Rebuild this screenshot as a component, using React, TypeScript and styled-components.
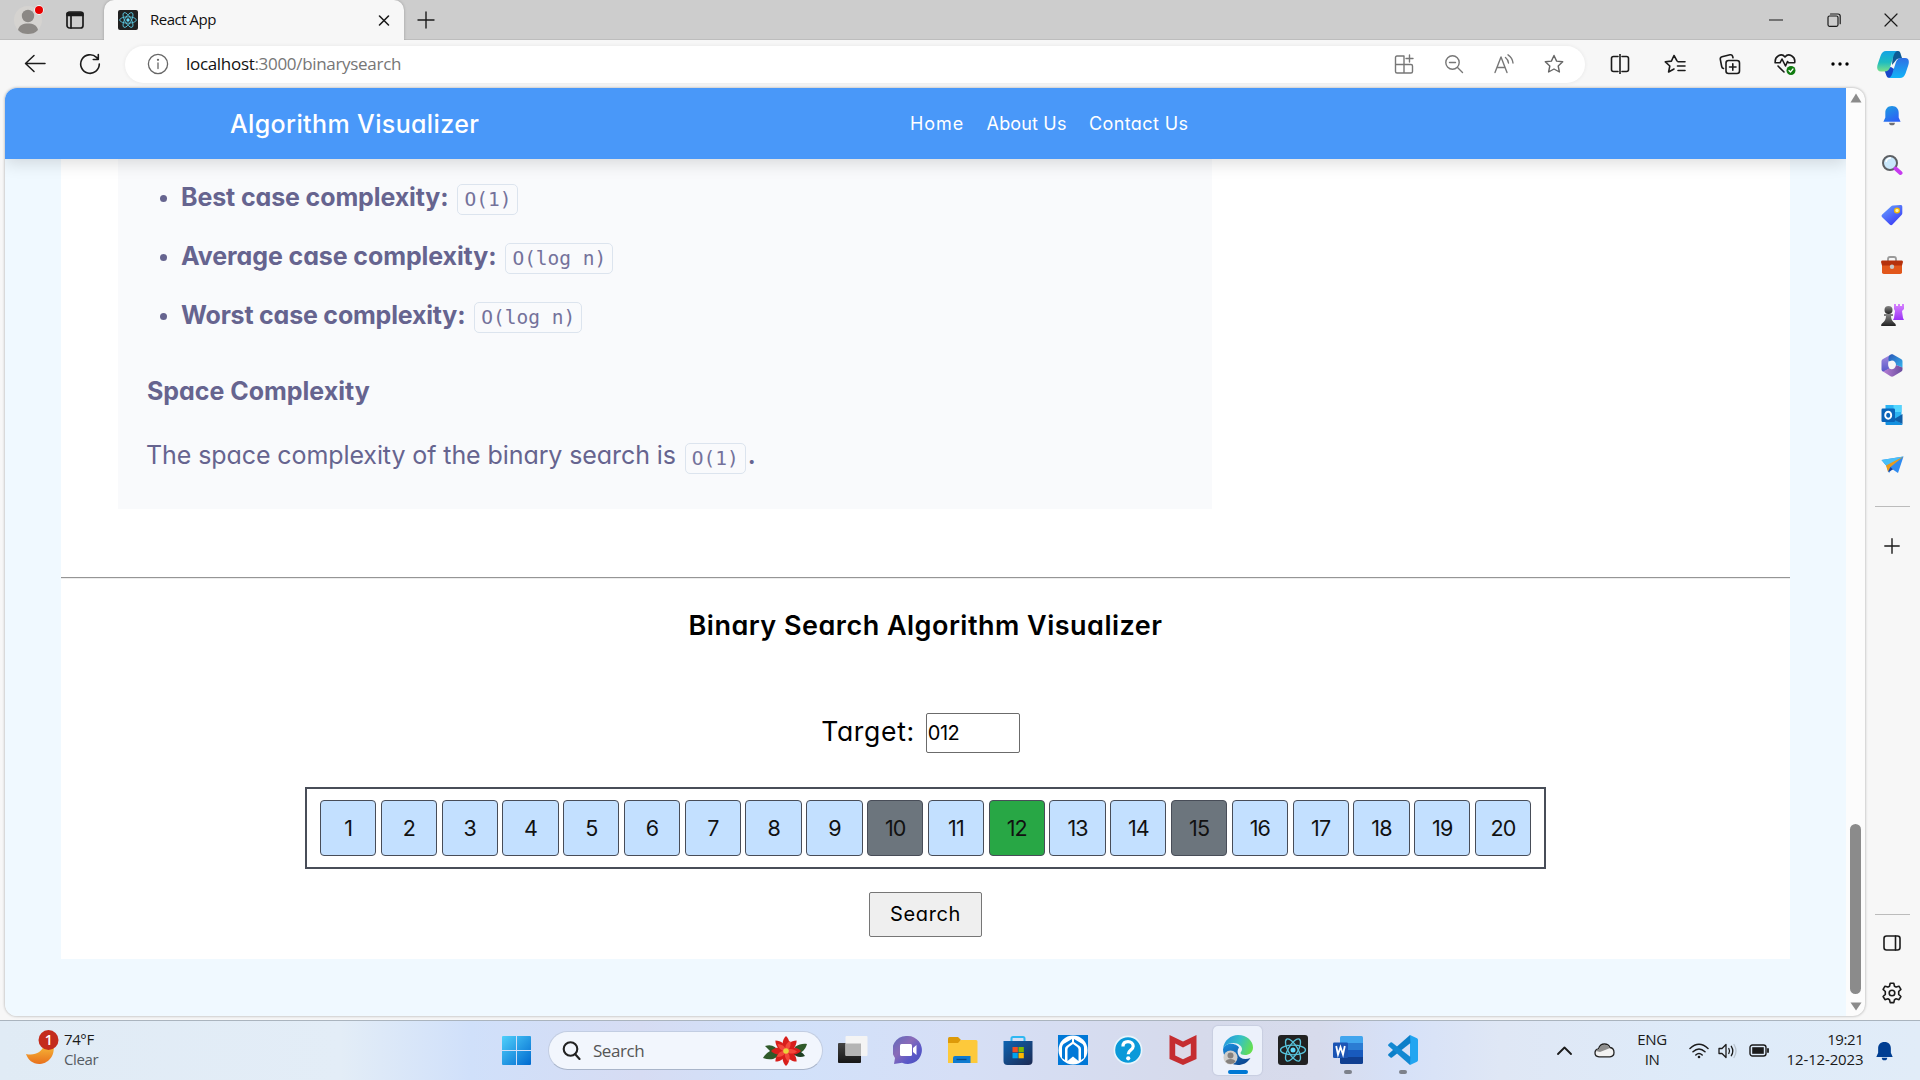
import React from 'react';
import styled, { createGlobalStyle, css } from 'styled-components';

const GlobalStyle = createGlobalStyle`
  * { box-sizing: border-box; }
  body { margin: 0; overflow: hidden; }
`;

const poppins = css`
  font-family: Inter, 'Open Sans', sans-serif;
  font-feature-settings: 'cv11';
`;
const segoe = css`
  font-family: 'Open Sans', 'Noto Sans', sans-serif;
`;

const Screen = styled.div`
  width: 1920px;
  height: 1080px;
  display: flex;
  flex-direction: column;
  overflow: hidden;
  background: #f7f7f7;
  ${segoe}
`;

/* ---------- Browser chrome ---------- */
const TabStrip = styled.div`
  flex: none;
  height: 40px;
  display: flex;
  background: #cdcdcd;
  box-shadow: inset 0 -1px 0 #bdbdbd;
`;
const StripStart = styled.div`
  width: 104px;
  display: flex;
  align-items: center;
  padding-left: 13px;
  gap: 22px;
`;
const Tab = styled.div`
  width: 300px;
  height: 40px;
  padding: 0 12px 0 14px;
  display: flex;
  align-items: center;
  background: #f7f7f7;
  border-radius: 10px 10px 0 0;
  box-shadow: 0 0 3px rgba(0, 0, 0, 0.25);
  clip-path: inset(0 -4px 0 -4px);
`;
const TabTitle = styled.span`
  flex: 1;
  margin-left: 12px;
  padding-bottom: 2px;
  font-size: 15px;
  letter-spacing: -0.48px;
  color: #111;
`;
const NewTab = styled.div`
  width: 43px;
  padding-bottom: 1px;
  display: flex;
  align-items: center;
  justify-content: center;
`;
const WindowButtons = styled.div`
  margin-left: auto;
  display: flex;
`;
const WindowButton = styled.div`
  width: 57.5px;
  height: 39px;
  display: flex;
  align-items: center;
  justify-content: center;
`;
const Toolbar = styled.div`
  flex: none;
  height: 48px;
  display: flex;
  align-items: center;
`;
const NavButtons = styled.div`
  width: 125px;
  display: flex;
  padding-left: 7px;
`;
const Slot = styled.div<{ $w: number }>`
  flex: none;
  width: ${(p) => p.$w}px;
  display: flex;
  align-items: center;
  justify-content: center;
`;
const AddressBar = styled.div`
  width: 1460px;
  height: 37px;
  padding: 0 6px 0 22px;
  display: flex;
  align-items: center;
  background: #fff;
  border-radius: 19px;
  box-shadow: 0 0 4px rgba(0, 0, 0, 0.07);
`;
const Url = styled.span`
  flex: 1;
  margin-left: 17px;
  padding-bottom: 2px;
  font-size: 17px;
  letter-spacing: -0.31px;
  color: #767676;
`;
const Host = styled.span`
  color: #111;
`;
const ToolbarActions = styled.div`
  margin-left: 7px;
  display: flex;
`;

/* ---------- Body ---------- */
const Body = styled.div`
  flex: none;
  height: 932px;
  display: flex;
`;
const Viewport = styled.div`
  margin-left: 5px;
  width: 1860px;
  height: 928px;
  display: flex;
  overflow: hidden;
  background: #fcfcfc;
  border-radius: 12px;
  box-shadow: 0 0 3px rgba(0, 0, 0, 0.35);
`;
const Page = styled.div`
  width: 1841px;
  display: flex;
  flex-direction: column;
  overflow: hidden;
  background: #f0f9ff;
  ${poppins}
`;
const Header = styled.header`
  flex: none;
  z-index: 1;
  height: 71px;
  padding-left: 225px;
  display: flex;
  align-items: center;
  color: #fff;
  background: #4998f9;
  box-shadow: 0 4px 16px rgba(0, 0, 0, 0.14);
`;
const Brand = styled.div`
  width: 680px;
  font-size: 25px;
  font-weight: 500;
  letter-spacing: 0.37px;
`;
const NavLink = styled.a<{ $spacing: number }>`
  margin-right: 22.5px;
  font-size: 18px;
  letter-spacing: ${(p) => p.$spacing}px;
`;
const Content = styled.main`
  width: 1729px;
  height: 800px;
  margin-left: 56px;
  display: flex;
  flex-direction: column;
  align-items: center;
  background: #fff;
`;
const Notes = styled.section`
  align-self: flex-start;
  width: 1094px;
  height: 350px;
  margin-left: 57px;
  padding: 8px 0 0 29px;
  background: #f9fafc;
  color: #66648f;
  font-size: 25px;
`;
const List = styled.ul`
  margin: 0;
  padding: 0 0 0 13px;
  list-style: none;
`;
const Item = styled.li<{ $spacing: number }>`
  height: 59px;
  display: flex;
  align-items: center;
  font-weight: 700;
  letter-spacing: ${(p) => p.$spacing}px;
  &::before {
    content: '';
    width: 7px;
    height: 7px;
    margin: 4px 14px 0 0;
    border-radius: 50%;
    background: #66648f;
  }
`;
const Code = styled.code`
  height: 31px;
  margin: 6px 0 0 9px;
  padding: 0 6px;
  display: inline-flex;
  align-items: center;
  border: 1.5px solid #dce4ee;
  border-radius: 5px;
  font: 400 19.5px 'DejaVu Sans Mono', monospace;
  letter-spacing: 0;
  color: #74729b;
  white-space: pre;
`;
const SpaceTitle = styled.h4`
  height: 48px;
  margin: 23px 0 0;
  line-height: 48px;
  font-size: 25px;
  font-weight: 700;
  letter-spacing: -0.02px;
`;
const SpaceText = styled.p`
  height: 50px;
  margin: 15px 0 0 -1px;
  display: flex;
  align-items: center;
  letter-spacing: -0.09px;
`;
const Period = styled.span`
  margin-left: 2px;
  font-weight: 600;
`;
const Divider = styled.hr`
  width: 100%;
  height: 2px;
  margin: 68px 0 0;
  border: 0;
  border-top: 1px solid #959595;
  border-bottom: 1px solid #ededed;
`;
const Title = styled.h2`
  height: 40px;
  margin: 27px 0 0;
  line-height: 40px;
  font-size: 27px;
  font-weight: 600;
  letter-spacing: 0.48px;
  color: #000;
`;
const TargetRow = styled.label`
  height: 40px;
  margin: 67px 10px 0 0;
  display: flex;
  align-items: center;
  font-size: 26.5px;
  letter-spacing: 0.7px;
  color: #000;
`;
const TargetLabel = styled.span`
  padding-bottom: 5px;
  margin-right: 11px;
`;
const TargetInput = styled.input`
  width: 94px;
  height: 40px;
  padding: 0 1px;
  border: 1px solid #6b6b6b;
  border-radius: 2px;
  font-size: 20px;
  letter-spacing: -0.6px;
  color: #000;
  ${poppins}
`;
const ArrayBox = styled.div`
  width: 1241px;
  height: 82px;
  margin-top: 34px;
  padding: 0 13px;
  display: flex;
  align-items: center;
  gap: 4.5px;
  border: 2px solid #484d58;
`;
type CellState = 'idle' | 'visited' | 'found';
const cellColors: Record<CellState, string> = { idle: '#c3e0ff', visited: '#6c757d', found: '#28a745' };
const Cell = styled.div<{ $state: CellState }>`
  flex: 1 1 0;
  height: 56px;
  padding-bottom: 1px;
  display: flex;
  align-items: center;
  justify-content: center;
  background: ${(p) => cellColors[p.$state]};
  border: 1px solid #484d58;
  border-radius: 4px;
  font-size: 21.5px;
  letter-spacing: -0.9px;
  color: #111;
`;
const SearchButton = styled.button`
  width: 113px;
  height: 45px;
  margin-top: 23px;
  padding: 0 0 2px;
  border: 1px solid #767676;
  border-radius: 2px;
  background: #efefef;
  font-size: 20px;
  letter-spacing: 0.65px;
  color: #000;
  ${poppins}
`;

const ScrollTrack = styled.div`
  width: 19px;
  display: flex;
  flex-direction: column;
  align-items: center;
  padding: 5px 0 5px;
`;
const ScrollThumb = styled.div`
  width: 11px;
  height: 170px;
  margin: auto 0 8px;
  border-radius: 6px;
  background: #8b8b8b;
`;

const SideBar = styled.aside`
  width: 55px;
  padding-right: 1px;
  height: 932px;
  display: flex;
  flex-direction: column;
  align-items: center;
`;
const SideSlot = styled.div<{ $h: number }>`
  flex: none;
  height: ${(p) => p.$h}px;
  display: flex;
  align-items: center;
`;
const SideLine = styled.div`
  width: 35px;
  height: 1px;
  background: #bcbcbc;
`;
const Spacer = styled.div`
  flex: 1;
`;

/* ---------- Taskbar ---------- */
const Taskbar = styled.footer`
  flex: none;
  height: 60px;
  display: flex;
  align-items: center;
  border-top: 1px solid #aab4be;
  background: linear-gradient(90deg, #e0ebf5 0, #e3edf7 340px, #d0e0fa 470px, #d6dcf3 640px, #d1e1fa 780px, #d6dff6 960px, #d6daeb 1200px, #d7dbec 1320px, #d6e1f8 1400px, #dfe7f5 1500px, #deebf9 1700px, #e1ecf8 1920px);
`;
const Weather = styled.div`
  width: 489px;
  padding-left: 26px;
  display: flex;
  align-items: center;
  gap: 4px;
`;
const Lines = styled.div<{ $align: string }>`
  display: flex;
  flex-direction: column;
  padding-bottom: 4px;
  text-align: ${(p) => p.$align};
  font-size: 15px;
  line-height: 20px;
  letter-spacing: -0.4px;
  color: #1a1a1a;
`;
const Stamp = styled.span`
  letter-spacing: -0.15px;
`;
const Muted = styled.span`
  color: #555c63;
`;
const SearchBox = styled.div`
  width: 275px;
  height: 39px;
  margin: 0 2px 0 5px;
  padding: 0 14px 0 13px;
  display: flex;
  align-items: center;
  gap: 12px;
  border: 1px solid #c2cde2;
  border-bottom-color: #a9b5ca;
  border-radius: 20px;
  background: #f2f6fd;
  font-size: 17px;
  letter-spacing: -0.45px;
  color: #555;
`;
const SearchLabel = styled.span`
  flex: 1;
`;
const AppSlot = styled.div<{ $active?: boolean; $running?: boolean }>`
  width: ${(p) => (p.$active ? 49 : 55)}px;
  height: 49px;
  margin: ${(p) => (p.$active ? '0 3px' : '0')};
  padding-top: 9px;
  display: flex;
  flex-direction: column;
  align-items: center;
  border-radius: 5px;
  background: ${(p) => (p.$active ? '#ecf1fb' : 'transparent')};
  box-shadow: ${(p) => (p.$active ? '0 0 1px 1px rgba(120,135,170,.15)' : 'none')};
  &::after {
    content: '';
    width: ${(p) => (p.$active ? 20 : 8)}px;
    height: 4px;
    margin-top: 5px;
    border-radius: 2px;
    background: ${(p) => (p.$active ? '#0078d4' : p.$running ? '#7d818b' : 'transparent')};
  }
`;
const Tray = styled.div`
  margin-left: auto;
  padding-right: 21px;
  display: flex;
  align-items: center;
`;

/* ---------- Icons ---------- */
type LineProps = { w: number; h?: number; c?: string; sw?: number; vb?: string; children: React.ReactNode };
const Line = ({ w, h = w, c = '#1b1b1b', sw = 1.4, vb, children }: LineProps) => (
  <svg width={w} height={h} viewBox={vb ?? `0 0 ${w} ${h}`} fill="none" stroke={c} strokeWidth={sw} strokeLinecap="round" strokeLinejoin="round">
    {children}
  </svg>
);
const Art = ({ w, h = w, vb, children }: { w: number; h?: number; vb?: string; children: React.ReactNode }) => (
  <svg width={w} height={h} viewBox={vb ?? `0 0 ${w} ${h}`}>{children}</svg>
);

const ReactLogo = ({ size }: { size: number }) => (
  <Art w={size} vb="0 0 30 30">
    <rect width="30" height="30" rx="3" fill="#212121" />
    <g fill="none" stroke="#58c4dc" strokeWidth="1.3">
      <ellipse cx="15" cy="15" rx="12.5" ry="4.8" />
      <ellipse cx="15" cy="15" rx="12.5" ry="4.8" transform="rotate(60 15 15)" />
      <ellipse cx="15" cy="15" rx="12.5" ry="4.8" transform="rotate(120 15 15)" />
    </g>
    <circle cx="15" cy="15" r="2.5" fill="#61dafb" />
  </Art>
);

const Avatar = () => (
  <Art w={31} h={34}>
    <circle cx="15" cy="17" r="14" fill="#d5d3d0" />
    <circle cx="15" cy="13" r="6.2" fill="#8b8885" />
    <path d="M5 27c1-5 5-6.500 10-6.500s9 1.500 10 6.500c-3 3-6 4-10 4s-7-1-10-4z" fill="#8b8885" />
    <circle cx="26" cy="7" r="4.700" fill="#fff" />
    <circle cx="26" cy="7" r="4" fill="#e80000" />
  </Art>
);

const starPath = 'M10 1.500l2.600 5.600 6.100.700-4.500 4.200 1.200 6-5.400-3-5.400 3 1.200-6L1.300 7.800l6.100-.700z';

const Copilot = () => (
  <Art w={32} h={28}>
    <defs>
      <linearGradient id="cpA" x1="0" y1="0" x2="0" y2="1"><stop offset="0" stopColor="#14a3e4" /><stop offset=".55" stopColor="#1fbcc0" /><stop offset="1" stopColor="#7be08a" /></linearGradient>
      <linearGradient id="cpB" x1="0" y1="0" x2="0" y2="1"><stop offset="0" stopColor="#2f6fe4" /><stop offset="1" stopColor="#12b4f7" /></linearGradient>
    </defs>
    <path d="M16 1h5c2 0 2.500 2 3 4l1 3-5 1-5 6z" fill="#0d5a94" />
    <path d="M7 19l7-2 3 2-1 9h-3c-2.500 0-3.300-1-4-3.500z" fill="#1747c9" />
    <path d="M9 1h11c-2 1-3 3-3.800 6l-3 10c-1 3-3 4.500-5.500 4.500H4C0 21.500-.5 18 .800 14l2.700-8C4.700 2.500 6.500 1 9 1z" fill="url(#cpA)" />
    <path d="M24 8h4c4 0 4.500 3.500 3.200 7.500l-2.700 8c-1.200 3-3 4.500-5.500 4.500H12c2-1 3-3 3.800-6l3-9.500C19.800 9.500 21.500 8 24 8z" fill="url(#cpB)" />
  </Art>
);

const BellIcon = ({ fill, w, h }: { fill: string; w: number; h: number }) => (
  <Art w={w} h={h} vb="0 0 18 22">
    <defs><linearGradient id="bellG" x1="0" y1="0" x2="0.600" y2="1"><stop offset="0" stopColor="#1da0e0" /><stop offset="1" stopColor="#2c62f5" /></linearGradient></defs>
    <path d="M6 18.500h6a3 2.800 0 0 1-6 0z" fill={fill === 'url(#bellG)' ? '#6f6f74' : fill} />
    <path d="M9 1c4.500 0 7 3 7 7v5l2 4.500H0L2 13V8c0-4 2.500-7 7-7z" fill={fill} />
  </Art>
);

const sideIcons: React.ReactNode[] = [
  <BellIcon key="bell" fill="url(#bellG)" w={18} h={21} />,
  <Art key="search" w={22}>
    <circle cx="9" cy="9" r="7" fill="#c9e7fb" stroke="#5d6064" strokeWidth="2" />
    <path d="M5 8a5 5 0 0 1 5-4" stroke="#fff" strokeWidth="1.500" fill="none" />
    <path d="M14.500 14.500l5 4.500" stroke="#c63bef" strokeWidth="4" strokeLinecap="round" />
  </Art>,
  <Art key="tag" w={22}>
    <defs><linearGradient id="tagG" x1="0" y1="0" x2=".7" y2="1"><stop offset="0" stopColor="#6aa8ff" /><stop offset="1" stopColor="#3a3af5" /></linearGradient></defs>
    <path d="M12 1.500l7.500-.5c1.200 0 1.800.6 1.800 1.800V9c0 1-.3 1.500-1 2.200L11.500 20.500c-1 1-1.800 1-2.800 0L1.200 13.300c-.9-.9-.9-1.900 0-2.800l9-8.300c.5-.5 1-.7 1.800-.7z" fill="url(#tagG)" />
    <circle cx="16" cy="6.500" r="2.400" fill="#fff3a0" stroke="#f5b700" strokeWidth="1.300" />
  </Art>,
  <Art key="toolbox" w={24} h={20}>
    <path d="M8 6V4c0-1.500.6-2 2-2h4c1.500 0 2 .5 2 2v2" fill="none" stroke="#9a9a9a" strokeWidth="1.800" />
    <rect x="2" y="6" width="20" height="13" rx="1.800" fill="#e2571b" />
    <path d="M2.500 5.500h19c.9 0 1.500.6 1.500 1.500l-1 3.500H2L1 7c0-.9.6-1.500 1.500-1.500z" fill="#b5310c" />
    <circle cx="12" cy="11.800" r="2.200" fill="#c8c8c8" />
  </Art>,
  <Art key="chess" w={23} h={24}>
    <defs>
      <linearGradient id="rookG" x1="0" y1="0" x2="0" y2="1"><stop offset="0" stopColor="#d884ff" /><stop offset="1" stopColor="#9a32f5" /></linearGradient>
      <linearGradient id="pawnG" x1="0" y1="0" x2="0" y2="1"><stop offset="0" stopColor="#888" /><stop offset="1" stopColor="#222" /></linearGradient>
    </defs>
    <path d="M13 1h2v2h2V1h2v2h2V1h2v5l-2 2 1 7 1 2H12l1-2 1-7-1-2z" fill="url(#rookG)" />
    <circle cx="7.500" cy="7" r="4" fill="url(#pawnG)" />
    <path d="M3 11h9v2h-2c0 3 1 5 4 7.500.7.500.800 1 .800 2.500H.200c0-1.500.1-2 .8-2.500C4 18 5 16 5 13H3z" fill="url(#pawnG)" />
  </Art>,
  <Art key="m365" w={22} h={23}>
    <defs>
      <linearGradient id="mA" x1="0" y1="0" x2="0" y2="1"><stop offset="0" stopColor="#a78be0" /><stop offset="1" stopColor="#5558c8" /></linearGradient>
      <linearGradient id="mB" x1="0" y1="0" x2="1" y2="1"><stop offset="0" stopColor="#2b57b8" /><stop offset="1" stopColor="#35b4ee" /></linearGradient>
      <linearGradient id="mC" x1="0" y1="0" x2="1" y2="0"><stop offset="0" stopColor="#b77fd6" /><stop offset="1" stopColor="#6a4c9e" /></linearGradient>
    </defs>
    <path d="M10 .5L2 5C1 5.600.500 6.500.500 7.500v8c0 1.500 1.500 2.500 3 2l5-3C7 13 6.800 10 7.500 7z" fill="url(#mA)" />
    <path d="M9.500.800c1-.6 2-.6 3 0L20 5c1 .6 1.500 1.500 1.500 2.500v6l-6.500-2.500c0-3-2-4.500-4-4.500L7.500 7.500V4c0-1.500.8-2.500 2-3.200z" fill="url(#mB)" />
    <path d="M2 17.500l6-3c3 1.500 6 1 7-3.500l6.500 2.500V15c0 1.300-.5 2.200-1.500 2.800l-7.500 4.400c-1 .6-2 .6-3 0z" fill="url(#mC)" />
  </Art>,
  <Art key="outlook" w={22}>
    <rect x="4.500" y="1" width="16" height="14" fill="#2bb3f3" />
    <rect x="12.500" y="1" width="8" height="7" fill="#53d6ff" />
    <path d="M4.500 10L21.500 20c0 .6-.5 1-1 1h-15c-.6 0-1-.4-1-1z" fill="#1490df" />
    <path d="M21.500 10v10l-9-4.500z" fill="#0f5ea8" />
    <rect x=".5" y="4.500" width="13.500" height="13.500" rx="1.200" fill="#0a64b8" />
    <ellipse cx="7.200" cy="11.200" rx="3" ry="3.500" fill="none" stroke="#fff" strokeWidth="1.900" />
  </Art>,
  <Art key="plane" w={23} h={18}>
    <path d="M.5 4L22.500.500 17 17l-6-4-3 4-2.500-7z" fill="#2f8bf0" />
    <path d="M.5 4L22.500.500 5.500 10z" fill="#49c0f8" />
    <path d="M22.500.500L5 9.500 7 16l2.500-5z" fill="#e89b1c" />
    <path d="M7 16l2.500-5 2.500 2.500z" fill="#173f9e" />
  </Art>,
];

const Poinsettia = () => (
  <Art w={45} h={30}>
    <g fill="#2f5a2a">
      <path d="M0 22c5-8 12-10 18-6-4 7-10 9-18 6z" />
      <path d="M2 10c6-2 11 0 14 6H8z" />
      <path d="M44 8c-8-1-14 3-15 9 8 2 13-2 15-9z" />
      <path d="M42 20c-4-6-9-6-13-4 3 5 8 6 13 4z" fill="#1f3f22" />
    </g>
    <g fill="#d81f1c">
      {[0, 45, 90, 135, 180, 225, 270, 315].map((a) => (
        <path key={a} d="M23 15C18 10 19 4 23 0c4 4 5 10 0 15z" transform={`rotate(${a} 23 15)`} />
      ))}
    </g>
    <g fill="#f4483c">
      {[22, 94, 166, 238, 310].map((a) => (
        <path key={a} d="M23 15c-3-3-3-7 0-11 3 4 3 8 0 11z" transform={`rotate(${a} 23 15)`} />
      ))}
    </g>
    <circle cx="23" cy="15" r="2.800" fill="#e9d23a" />
  </Art>
);

const WindowsLogo = () => (
  <Art w={29}>
    <defs><linearGradient id="winG" x1="0" y1="0" x2="29" y2="29" gradientUnits="userSpaceOnUse"><stop offset="0" stopColor="#4fd0fb" /><stop offset="1" stopColor="#0069cf" /></linearGradient></defs>
    <path d="M1 0h13v14H0V1q0-1 1-1zM15 0h13q1 0 1 1v13H15zM0 15h14v14H1q-1 0-1-1zM15 15h14v13q0 1-1 1H15z" fill="url(#winG)" />
  </Art>
);

const appIcons: { id: string; active?: boolean; running?: boolean; icon: React.ReactNode }[] = [
  { id: 'taskview', icon: (
    <Art w={30}>
      <defs><linearGradient id="tvG" x1="0" y1="0" x2="0" y2="1"><stop offset="0" stopColor="#444" /><stop offset="1" stopColor="#161616" /></linearGradient></defs>
      <rect x="0" y="8" width="23" height="20" rx="1" fill="url(#tvG)" />
      <rect x="7.500" y="1" width="22" height="20" rx="1" fill="#f4f4f4" />
      <path d="M7.500 8.500H23V21H8.500q-1 0-1-1z" fill="#b4b4b4" />
    </Art>) },
  { id: 'chat', icon: (
    <Art w={30}>
      <defs><linearGradient id="chG" x1="0" y1="0" x2="1" y2="1"><stop offset="0" stopColor="#5d6bbd" /><stop offset=".4" stopColor="#8a6bb8" /><stop offset=".7" stopColor="#5a58c8" /><stop offset="1" stopColor="#4b4fb8" /></linearGradient></defs>
      <path d="M15 1a14 14 0 1 1-6 26.700L1 29l1-6A14 14 0 0 1 15 1z" fill="url(#chG)" />
      <rect x="7" y="9" width="12" height="12" rx="1.500" fill="#fff" />
      <path d="M20 13l3.500-3v10L20 17z" fill="#fff" />
    </Art>) },
  { id: 'files', icon: (
    <Art w={30}>
      <path d="M0 3.500Q0 2 1.500 2H10l3 3-3 4H0z" fill="#dd9a09" />
      <path d="M0 8h10l3-3h15q1.500 0 1.500 1.500V28H0z" fill="#fdc93b" />
      <path d="M5 28v-5q0-2 2-2h15.500v7z" fill="#0f7bd0" />
      <path d="M8.500 24.500h10" stroke="#0a4a86" strokeWidth="1.300" />
    </Art>) },
  { id: 'store', icon: (
    <Art w={30}>
      <defs><linearGradient id="stG" x1="0" y1="0" x2="1" y2="1"><stop offset="0" stopColor="#0d64b3" /><stop offset="1" stopColor="#1d2a52" /></linearGradient></defs>
      <path d="M8.500 8V3.500q0-1.500 1.500-1.500h10q1.500 0 1.500 1.500V8" fill="none" stroke="#2fb8f2" strokeWidth="2" />
      <path d="M.5 6h29v20q0 4-4 4h-21q-4 0-4-4z" fill="url(#stG)" />
      <rect x="9.500" y="12" width="5.300" height="5.300" fill="#f25022" /><rect x="15.500" y="12" width="5.300" height="5.300" fill="#7fba00" />
      <rect x="9.500" y="18" width="5.300" height="5.300" fill="#00a4ef" /><rect x="15.500" y="18" width="5.300" height="5.300" fill="#ffb900" />
    </Art>) },
  { id: 'assistant', icon: (
    <Art w={30}>
      <rect width="30" height="30" fill="#0078d7" />
      <circle cx="15" cy="15" r="14.500" fill="#fff" />
      <path d="M4 23V12.500Q4 10.500 5.500 9L14 4v3L8.500 11Q7 12 7 14v11zM26 23V12.500Q26 10.500 24.500 9L16 4v3l5.500 4Q23 12 23 14v11z" fill="#0078d7" />
      <path d="M9.500 26V14.500Q9.500 13 10.800 12L15 9l4.200 3q1.300 1 1.300 2.500V26L15 21.500z" fill="#0078d7" />
    </Art>) },
  { id: 'help', icon: (
    <Art w={30}>
      <circle cx="15" cy="15" r="13.600" fill="#0a99d9" stroke="#e8f5fc" strokeWidth="1.600" />
      <path d="M10 11.500c0-3 2-4.800 5-4.800s5.200 1.800 5.200 4.500c0 3.800-5 3.800-5 8" fill="none" stroke="#fff" strokeWidth="3.200" />
      <circle cx="15.200" cy="23.300" r="2.100" fill="#fff" />
    </Art>) },
  { id: 'mcafee', icon: (
    <Art w={30}>
      <path d="M1.500 0L15 6.500 28.500 0v24L15 30 1.500 24z" fill="#c52d30" />
      <path d="M7.200 8.500L15 12.500l7.800-4v12L15 24.300 7.200 20.500z" fill="#dcd9e8" />
    </Art>) },
  { id: 'edge', active: true, icon: (
    <Art w={30}>
      <defs>
        <linearGradient id="edA" x1="0" y1=".3" x2="1" y2=".6"><stop offset="0" stopColor="#2596dd" /><stop offset=".5" stopColor="#35c1c6" /><stop offset="1" stopColor="#66e04d" /></linearGradient>
        <linearGradient id="edB" x1="0" y1="0" x2=".6" y2="1"><stop offset="0" stopColor="#1a8fe0" /><stop offset="1" stopColor="#0c4a94" /></linearGradient>
      </defs>
      <path d="M0 14C0 20 4 30 15 30c5 0 9-2 12.500-7-6 2.500-11 .5-12.500-4-1-3 0-5 1-6.500C14 8.500 3 6 0 14z" fill="url(#edB)" />
      <path d="M0 14C1 5 8 0 15 0c9 0 15 6 15 12.500 0 5-4 7.500-8 7.500-3 0-4.500-1-4.500-2s1.500-1.800 1.500-4c0-3-4-6-8.500-6C6 8 2 10 0 14z" fill="url(#edA)" />
      <circle cx="7.500" cy="22.500" r="7" fill="#cfcdca" /><circle cx="7.500" cy="20.500" r="3" fill="#85817e" />
      <path d="M2.500 26.500q1-2.500 5-2.500t5 2.500q-2 2.500-5 2.500t-5-2.500z" fill="#85817e" />
    </Art>) },
  { id: 'react', icon: <ReactLogo size={30} /> },
  { id: 'word', running: true, icon: (
    <Art w={30}>
      <path d="M7 2.500Q7 1 8.500 1h20Q30 1 30 2.500V8H7z" fill="#41a5ee" />
      <path d="M7 8h23v7H7z" fill="#2b7cd3" /><path d="M7 15h23v7H7z" fill="#185abd" /><path d="M7 22h23v5.500q0 1.500-1.500 1.500h-20Q7 29 7 27.500z" fill="#103f91" />
      <rect x="0" y="7.500" width="15" height="15.500" rx="1.300" fill="#1b54b4" />
      <path d="M3.200 11l1.800 8.500L7.500 12 10 19.500 11.800 11" fill="none" stroke="#fff" strokeWidth="1.800" />
    </Art>) },
  { id: 'vscode', running: true, icon: (
    <Art w={30}>
      <path d="M22 0l7 3.300q1 .5 1 1.700v20q0 1.200-1 1.700L22 30z" fill="#22a5f1" />
      <path d="M22 0l.5 8L4 22.500q-.8.500-1.500 0L.5 20.700q-.8-.9 0-1.700z" fill="#0b7fc9" />
      <path d="M22 30l.5-8L4 7.500q-.8-.5-1.500 0L.5 9.300q-.8.9 0 1.700z" fill="#1288d2" />
    </Art>) },
];

/* ---------- App ---------- */
const cells = Array.from({ length: 20 }, (_, i) => i + 1);
const stateOf = (n: number): CellState => (n === 12 ? 'found' : n === 10 || n === 15 ? 'visited' : 'idle');

export default function App() {
  return (
    <Screen>
      <GlobalStyle />
      <TabStrip>
        <StripStart>
          <Avatar />
          <Line w={18} sw={1.7}>
            <rect x="1" y="1" width="16" height="16" rx="2.500" />
            <path d="M1.500 2.500h15M1.500 4h15" strokeWidth="2.400" />
            <path d="M5 5v12" />
          </Line>
        </StripStart>
        <Tab>
          <ReactLogo size={20} />
          <TabTitle>React App</TabTitle>
          <Line w={16}><path d="M3.500 4l9 9M12.500 4l-9 9" strokeWidth="1.600" /></Line>
        </Tab>
        <NewTab><Line w={18}><path d="M9 1v16M1 9h16" /></Line></NewTab>
        <WindowButtons>
          <WindowButton><Line w={14} sw={1.2}><path d="M.5 7h13" /></Line></WindowButton>
          <WindowButton><Line w={14} sw={1.2}><rect x="1" y="3" width="10" height="10.300" rx="1.500" /><path d="M3.500 1h7.500q2.200 0 2.200 2.200v7.500" /></Line></WindowButton>
          <WindowButton><Line w={14} sw={1.2}><path d="M1 1l12 12M13 1L1 13" /></Line></WindowButton>
        </WindowButtons>
      </TabStrip>

      <Toolbar>
        <NavButtons>
          <Slot $w={55}><Line w={22} sw={1.5}><path d="M21 10.500H2M10 2.500l-8.500 8 8.500 8" /></Line></Slot>
          <Slot $w={55}><Line w={22} sw={1.6}><path d="M20.300 11A9.300 9.300 0 1 1 17.500 4.400l1.500 1.600M19.300 1.500v5h-5" /></Line></Slot>
        </NavButtons>
        <AddressBar>
          <Line w={22} c="#666" sw={1.3}><circle cx="11" cy="11" r="9.600" /><path d="M11 10v5.500" /><circle cx="11" cy="6.800" r=".5" /></Line>
          <Url><Host>localhost</Host>:3000/binarysearch</Url>
          <Slot $w={50}><Line w={20} c="#777"><path d="M9.500 2H3q-1.500 0-1.500 1.500v14Q1.500 19 3 19h14q1.500 0 1.500-1.500V12q0-1.500-1.500-1.500H1.500M10 2v17M15.500 1v7M12 4.500h7" /></Line></Slot>
          <Slot $w={50}><Line w={20} c="#777"><circle cx="8.500" cy="8.500" r="6.700" /><path d="M13.500 13.500l5 5M5.500 8.500h6" /></Line></Slot>
          <Slot $w={50}><Line w={20} c="#777"><path d="M1 18.500L7 3l6 15.500M3 13.500h8M11.500 3.500q2.500 2 3 5.500M14 .8q4.500 3 5 8.200" /></Line></Slot>
          <Slot $w={50}><Line w={20} c="#666"><path d={starPath} /></Line></Slot>
        </AddressBar>
        <ToolbarActions>
          <Slot $w={55}><Line w={20} sw={1.6}><path d="M8 2.500H3.500q-2 0-2 2v11q0 2 2 2H8M12 2.500h4.500q2 0 2 2v11q0 2-2 2H12M10 0v20" /></Line></Slot>
          <Slot $w={55}><Line w={22} h={20} sw={1.6}><path d="M13 6.800L10 1.500 7.400 7.100l-6.100.700 4.500 4.200-1.200 6L10 15M14 7.800h7M13.500 12h7.500M14 16.500h7" /></Line></Slot>
          <Slot $w={55}><Line w={22} sw={1.6}><rect x="7" y="7.500" width="13.500" height="13" rx="2.500" /><path d="M13.800 10.800v6.500M10.500 14h6.500M4.500 15.500q-1.500-.4-1.800-2L1.300 6.300Q1 4.300 3 3.800l8-2q2-.5 2.600 1.500l.4 1.500" /></Line></Slot>
          <Slot $w={55}>
            <Line w={22} h={22} sw={1.6}>
              <path d="M1.300 9.500C.3 3.500 7.500-.5 11 4c3.500-4.500 10.700-.5 9.700 5.500M4 13l6 6M1 9.800h5L8 6l3.500 7 2-4.500 1 1.300h6" />
              <circle cx="17" cy="17.500" r="4.500" fill="#107c10" stroke="none" />
              <path d="M15 17.500l1.500 1.500 2.500-3" stroke="#fff" strokeWidth="1.200" />
            </Line>
          </Slot>
          <Slot $w={55}><Art w={18} h={4}><circle cx="2" cy="2" r="1.700" /><circle cx="9" cy="2" r="1.700" /><circle cx="16" cy="2" r="1.700" /></Art></Slot>
          <Slot $w={52}><Copilot /></Slot>
        </ToolbarActions>
      </Toolbar>

      <Body>
        <Viewport>
          <Page>
            <Header>
              <Brand>Algorithm Visualizer</Brand>
              <NavLink $spacing={0.9}>Home</NavLink>
              <NavLink $spacing={0.16}>About Us</NavLink>
              <NavLink $spacing={0.38}>Contact Us</NavLink>
            </Header>
            <Content>
              <Notes>
                <List>
                  <Item $spacing={-0.12}>Best case complexity:<Code>O(1)</Code></Item>
                  <Item $spacing={-0.1}>Average case complexity:<Code>O(log n)</Code></Item>
                  <Item $spacing={-0.2}>Worst case complexity:<Code>O(log n)</Code></Item>
                </List>
                <SpaceTitle>Space Complexity</SpaceTitle>
                <SpaceText>The space complexity of the binary search is<Code>O(1)</Code><Period>.</Period></SpaceText>
              </Notes>
              <Divider />
              <Title>Binary Search Algorithm Visualizer</Title>
              <TargetRow>
                <TargetLabel>Target:</TargetLabel>
                <TargetInput defaultValue="012" />
              </TargetRow>
              <ArrayBox>
                {cells.map((n) => <Cell key={n} $state={stateOf(n)}>{n}</Cell>)}
              </ArrayBox>
              <SearchButton>Search</SearchButton>
            </Content>
          </Page>
          <ScrollTrack>
            <Art w={12} h={10}><path d="M6 0.500L11.500 9.500H.5z" fill="#8b8b8b" /></Art>
            <ScrollThumb />
            <Art w={12} h={9}><path d="M.5.5h11L6 8.500z" fill="#8b8b8b" /></Art>
          </ScrollTrack>
        </Viewport>
        <SideBar>
          <SideSlot $h={2} />
          {sideIcons.map((icon, i) => <SideSlot key={i} $h={50}>{icon}</SideSlot>)}
          <SideSlot $h={32}><SideLine /></SideSlot>
          <SideSlot $h={48}><Line w={16}><path d="M8 .8v14.400M.8 8h14.400" /></Line></SideSlot>
          <Spacer />
          <SideLine />
          <SideSlot $h={55}><Line w={18} h={16} sw={1.6}><rect x="1" y="1" width="16" height="14" rx="2.500" /><path d="M12.500 1v14" /></Line></SideSlot>
          <SideSlot $h={46}>
            <Line w={22} sw={1.6}>
              <circle cx="11" cy="11" r="2.800" />
              <path d="M9.200 1.300h3.600l.7 2.900 1.600.9 2.900-.9 1.900 3.200-2.200 2.100v2.900l2.200 2.100-1.900 3.200-2.900-.9-1.600.9-.7 2.900H9.200l-.7-2.900-1.600-.9-2.900.9-1.900-3.200 2.200-2.100V9.500L2.100 7.400 4 4.200l2.900.9 1.600-.9z" />
            </Line>
          </SideSlot>
          <SideSlot $h={4} />
        </SideBar>
      </Body>

      <Taskbar>
        <Weather>
          <Art w={34} h={42}>
            <defs><linearGradient id="moonG" x1="0" y1="0" x2="0" y2="1"><stop offset="0" stopColor="#f8c23c" /><stop offset="1" stopColor="#e8701c" /></linearGradient></defs>
            <path d="M0 24c9 2 16-2 18-9l9-2c3 11-3 20-13 21C7 34.300 2 30 0 24z" fill="url(#moonG)" />
            <circle cx="22.500" cy="10" r="10" fill="#c42b1c" />
            <text x="22.800" y="15" textAnchor="middle" fontFamily="Open Sans, sans-serif" fontWeight="600" fontSize="14" fill="#fff">1</text>
          </Art>
          <Lines $align="left"><span>74°F</span><Muted>Clear</Muted></Lines>
        </Weather>
        <Slot $w={54}><WindowsLogo /></Slot>
        <SearchBox>
          <Line w={19} sw={2.1} c="#222"><circle cx="8.500" cy="8" r="6.800" /><path d="M13 13l4.500 5" /></Line>
          <SearchLabel>Search</SearchLabel>
          <Poinsettia />
        </SearchBox>
        {appIcons.map((a) => <AppSlot key={a.id} $active={a.active} $running={a.running}>{a.icon}</AppSlot>)}
        <Tray>
          <Slot $w={40}><Line w={15} h={9} sw={1.8}><path d="M1 8l6.500-6.500L14 8" /></Line></Slot>
          <Slot $w={40}>
            <Art w={21} h={15}>
              <path d="M5 13.800Q1 13.500 1 10 1 6.500 4.500 6 6 1 10.500 1q4 0 5.500 3.500 4 .5 4 5 0 4-4 4.300z" fill="#f2f2f2" stroke="#222" strokeWidth="1.300" />
              <path d="M2 8q1-2 3-2 1.500-4.300 5.500-4.300 4 0 5 3.600L6 9z" fill="#8e8e8e" />
            </Art>
          </Slot>
          <Slot $w={56}><Lines $align="center"><span>ENG</span><span>IN</span></Lines></Slot>
          <Slot $w={38}>
            <Line w={20} h={16} sw={1.5}><path d="M1 5.500q9-8.500 18 0M4 8.800q6-5.600 12 0M6.800 12q3.200-3 6.400 0" /><circle cx="10" cy="14" r="1.300" fill="#1b1b1b" stroke="none" /></Line>
          </Slot>
          <Slot $w={20}>
            <Line w={20} h={16} sw={1.3}><path d="M1 5.500h3l4-4v13l-4-4H1zM10.800 5.500q1.500 2.500 0 5M13.300 3.300q3 4.700 0 9.400" /><path d="M16 1.500q4 6.500 0 13" stroke="#b9c3cd" /></Line>
          </Slot>
          <Slot $w={42}>
            <Line w={20} h={13} sw={1.4}><rect x="1" y="1" width="16" height="11" rx="2.500" /><rect x="3.200" y="3.200" width="11.600" height="6.600" fill="#1b1b1b" stroke="none" /><path d="M19 5v3" strokeWidth="1.800" /></Line>
          </Slot>
          <Slot $w={90}><Lines $align="right"><span>19:21</span><Stamp>12-12-2023</Stamp></Lines></Slot>
          <Slot $w={29}><BellIcon fill="#003e92" w={17} h={20} /></Slot>
        </Tray>
      </Taskbar>
    </Screen>
  );
}
